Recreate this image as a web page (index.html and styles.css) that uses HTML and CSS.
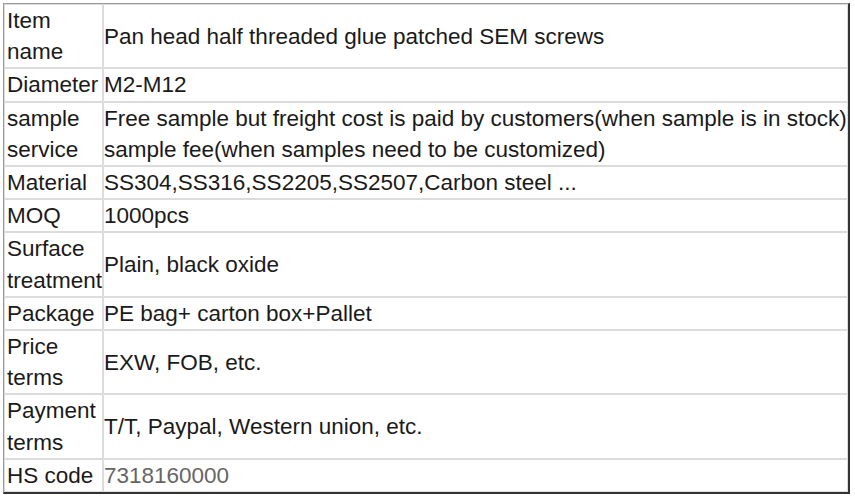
FILE: index.html
```html
<!DOCTYPE html>
<html>
<head>
<meta charset="utf-8">
<link rel="stylesheet" href="styles.css">
</head>
<body>
<table class="spec">
<tbody>
<tr><td class="k">Item name</td><td class="v">Pan head half threaded glue patched SEM screws</td></tr>
<tr><td class="k">Diameter</td><td class="v">M2-M12</td></tr>
<tr><td class="k">sample service</td><td class="v">Free sample but freight cost is paid by customers(when sample is in stock)<br>sample fee(when samples need to be customized)</td></tr>
<tr><td class="k">Material</td><td class="v">SS304,SS316,SS2205,SS2507,Carbon steel ...</td></tr>
<tr><td class="k">MOQ</td><td class="v">1000pcs</td></tr>
<tr><td class="k">Surface treatment</td><td class="v">Plain, black oxide</td></tr>
<tr><td class="k">Package</td><td class="v">PE bag+ carton box+Pallet</td></tr>
<tr><td class="k">Price terms</td><td class="v">EXW, FOB, etc.</td></tr>
<tr><td class="k">Payment terms</td><td class="v">T/T, Paypal, Western union, etc.</td></tr>
<tr><td class="k">HS code</td><td class="v muted">7318160000</td></tr>
</tbody>
</table>
</body>
</html>
```
FILE: styles.css
```css
html, body {
  margin: 0;
  padding: 0;
  background: #fff;
}
body {
  padding: 3px;
  font-family: "Liberation Sans", Arial, sans-serif;
  font-size: 22.5px;
  line-height: 31.2px;
  color: #1a1a1a;
}
.spec {
  width: 847px;
  table-layout: fixed;
  border-collapse: separate;
  border-spacing: 0;
  border-style: solid;
  border-width: 1px 2px 2px 1px;
  border-color: #9a9a9a #333 #333 #9a9a9a;
}
.spec td {
  border: 1px solid #dcdcdc;
  padding: 0;
  vertical-align: middle;
}
.spec .k {
  width: 95px;
  padding-left: 2px;
}
.spec .v {
  white-space: nowrap;
  padding-left: 0;
}
.spec .muted {
  color: #666;
}
```
